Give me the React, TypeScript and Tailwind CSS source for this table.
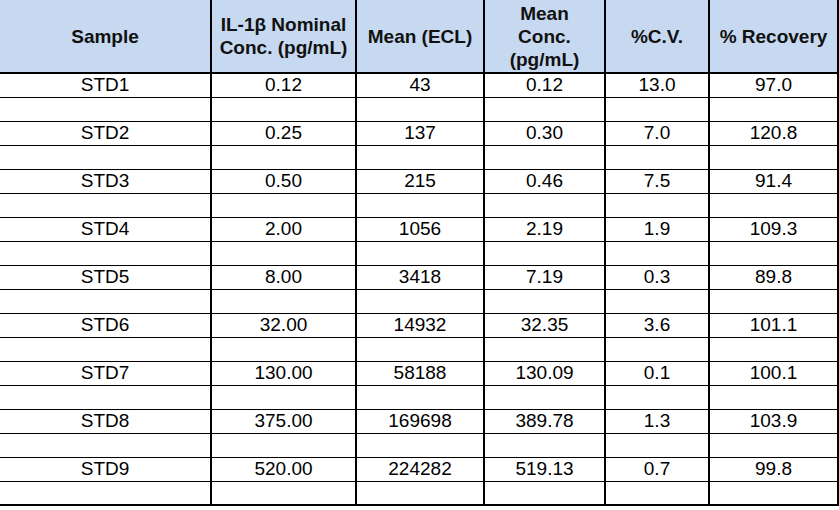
type Row = {
  sample: string;
  nominal: string;
  ecl: string;
  conc: string;
  cv: string;
  recovery: string;
};

const rows: Row[] = [
  { sample: "STD1", nominal: "0.12", ecl: "43", conc: "0.12", cv: "13.0", recovery: "97.0" },
  { sample: "STD2", nominal: "0.25", ecl: "137", conc: "0.30", cv: "7.0", recovery: "120.8" },
  { sample: "STD3", nominal: "0.50", ecl: "215", conc: "0.46", cv: "7.5", recovery: "91.4" },
  { sample: "STD4", nominal: "2.00", ecl: "1056", conc: "2.19", cv: "1.9", recovery: "109.3" },
  { sample: "STD5", nominal: "8.00", ecl: "3418", conc: "7.19", cv: "0.3", recovery: "89.8" },
  { sample: "STD6", nominal: "32.00", ecl: "14932", conc: "32.35", cv: "3.6", recovery: "101.1" },
  { sample: "STD7", nominal: "130.00", ecl: "58188", conc: "130.09", cv: "0.1", recovery: "100.1" },
  { sample: "STD8", nominal: "375.00", ecl: "169698", conc: "389.78", cv: "1.3", recovery: "103.9" },
  { sample: "STD9", nominal: "520.00", ecl: "224282", conc: "519.13", cv: "0.7", recovery: "99.8" },
];

const headers = [
  ["Sample"],
  ["IL-1β Nominal", "Conc. (pg/mL)"],
  ["Mean (ECL)"],
  ["Mean", "Conc.", "(pg/mL)"],
  ["%C.V."],
  ["% Recovery"],
];

function Cell({ children, last }: { children?: React.ReactNode; last?: boolean }) {
  return (
    <div
      className={`flex h-6 items-center justify-center border-r-2 border-black ${
        last ? "border-b-2" : "border-b"
      }`}
    >
      {children}
    </div>
  );
}

export default function App() {
  return (
    <div className="h-[510px] w-[839px] overflow-hidden bg-white text-[19px] text-black font-['Liberation_Sans',Arial,sans-serif]">
      <div className="grid grid-cols-[212px_145px_128px_121px_104px_129px]">
        {headers.map((lines, i) => (
          <div
            key={i}
            className="flex h-[74px] flex-col items-center justify-center border-r-2 border-b-2 border-black bg-[#c6d9f0] font-bold leading-[23px] text-[#111]"
          >
            {lines.map((l) => (
              <span key={l}>{l}</span>
            ))}
          </div>
        ))}

        {rows.map((r, idx) => {
          const last = idx === rows.length - 1;
          return [
            <Cell key={`${r.sample}-a`}>{r.sample}</Cell>,
            <Cell key={`${r.sample}-b`}>{r.nominal}</Cell>,
            <Cell key={`${r.sample}-c`}>{r.ecl}</Cell>,
            <Cell key={`${r.sample}-d`}>{r.conc}</Cell>,
            <Cell key={`${r.sample}-e`}>{r.cv}</Cell>,
            <Cell key={`${r.sample}-f`}>{r.recovery}</Cell>,
            <Cell key={`${r.sample}-g`} last={last} />,
            <Cell key={`${r.sample}-h`} last={last} />,
            <Cell key={`${r.sample}-i`} last={last} />,
            <Cell key={`${r.sample}-j`} last={last} />,
            <Cell key={`${r.sample}-k`} last={last} />,
            <Cell key={`${r.sample}-l`} last={last} />,
          ];
        })}
      </div>
    </div>
  );
}
